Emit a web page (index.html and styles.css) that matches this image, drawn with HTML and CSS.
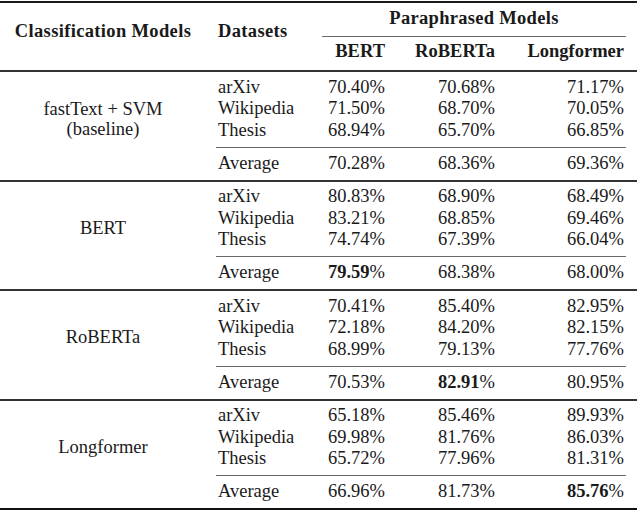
FILE: index.html
```html
<!DOCTYPE html>
<html>
<head>
<meta charset="utf-8">
<link rel="stylesheet" href="styles.css">
</head>
<body>
<div class="tbl">
  <div class="head">
    <div class="hlabel">Classification Models</div>
    <div class="hlabel left">Datasets</div>
    <div class="hpara">Paraphrased Models</div>
    <div class="hcmid"></div>
    <div class="num b">BERT</div>
    <div class="num b">RoBERTa</div>
    <div class="num b last">Longformer</div>
  </div>

  <div class="group">
    <div class="label two">fastText + SVM<br>(baseline)</div>
    <div class="ds">arXiv</div><div class="num">70.40%</div><div class="num">70.68%</div><div class="num last">71.17%</div>
    <div class="ds">Wikipedia</div><div class="num">71.50%</div><div class="num">68.70%</div><div class="num last">70.05%</div>
    <div class="ds">Thesis</div><div class="num">68.94%</div><div class="num">65.70%</div><div class="num last">66.85%</div>
    <div class="cmid"></div>
    <div class="ds">Average</div><div class="num">70.28%</div><div class="num">68.36%</div><div class="num last">69.36%</div>
  </div>

  <div class="group">
    <div class="label">BERT</div>
    <div class="ds">arXiv</div><div class="num">80.83%</div><div class="num">68.90%</div><div class="num last">68.49%</div>
    <div class="ds">Wikipedia</div><div class="num">83.21%</div><div class="num">68.85%</div><div class="num last">69.46%</div>
    <div class="ds">Thesis</div><div class="num">74.74%</div><div class="num">67.39%</div><div class="num last">66.04%</div>
    <div class="cmid"></div>
    <div class="ds">Average</div><div class="num"><strong>79.59</strong>%</div><div class="num">68.38%</div><div class="num last">68.00%</div>
  </div>

  <div class="group">
    <div class="label">RoBERTa</div>
    <div class="ds">arXiv</div><div class="num">70.41%</div><div class="num">85.40%</div><div class="num last">82.95%</div>
    <div class="ds">Wikipedia</div><div class="num">72.18%</div><div class="num">84.20%</div><div class="num last">82.15%</div>
    <div class="ds">Thesis</div><div class="num">68.99%</div><div class="num">79.13%</div><div class="num last">77.76%</div>
    <div class="cmid"></div>
    <div class="ds">Average</div><div class="num">70.53%</div><div class="num"><strong>82.91</strong>%</div><div class="num last">80.95%</div>
  </div>

  <div class="group final">
    <div class="label">Longformer</div>
    <div class="ds">arXiv</div><div class="num">65.18%</div><div class="num">85.46%</div><div class="num last">89.93%</div>
    <div class="ds">Wikipedia</div><div class="num">69.98%</div><div class="num">81.76%</div><div class="num last">86.03%</div>
    <div class="ds">Thesis</div><div class="num">65.72%</div><div class="num">77.96%</div><div class="num last">81.31%</div>
    <div class="cmid"></div>
    <div class="ds">Average</div><div class="num">66.96%</div><div class="num">81.73%</div><div class="num last"><strong>85.76</strong>%</div>
  </div>
</div>
</body>
</html>
```

FILE: styles.css
```css
html, body {
  margin: 0;
  padding: 0;
  background: #ffffff;
}

.tbl {
  width: 637px;
  margin-top: 1px;
  font-family: "Liberation Serif", "Times New Roman", serif;
  font-size: 18.5px;
  line-height: 21.5px;
  color: #1a1a1a;
}

.head,
.group {
  display: grid;
  grid-template-columns: 206px 116px 69px 110px 136px;
}

.head {
  border-top: 2px solid #1a1a1a;
  padding-top: 5.25px;
  padding-bottom: 7.25px;
}

.hlabel {
  grid-row: 1 / span 3;
  align-self: center;
  text-align: center;
  font-weight: bold;
  letter-spacing: 0.35px;
  padding-bottom: 7px;
  white-space: nowrap;
}

.hlabel.left {
  text-align: left;
  padding-left: 12px;
}

.hpara {
  grid-column: 3 / -1;
  text-align: center;
  font-weight: bold;
  letter-spacing: 0.3px;
  margin-right: 11px;
}

.hcmid {
  grid-column: 3 / -1;
  height: 1px;
  background: #6a6a6a;
  margin: 5.75px 11px 4.75px 0;
}

.b {
  font-weight: bold;
}

.group {
  border-top: 2px solid #333333;
  padding-top: 4.5px;
  padding-bottom: 5.5px;
}

.group.final {
  border-bottom: 2px solid #111111;
}

.label {
  grid-row: 1 / span 5;
  align-self: center;
  text-align: center;
  padding-bottom: 13px;
}

.label.two {
  line-height: 20px;
}

.ds {
  padding-left: 12px;
  white-space: nowrap;
}

.num {
  text-align: right;
  padding-right: 6px;
  white-space: nowrap;
}

.num.last {
  padding-right: 13px;
}

.cmid {
  grid-column: 2 / -1;
  height: 1px;
  background: #6a6a6a;
  margin: 5.5px 11px 5px 10px;
}

strong {
  font-weight: bold;
}
```
